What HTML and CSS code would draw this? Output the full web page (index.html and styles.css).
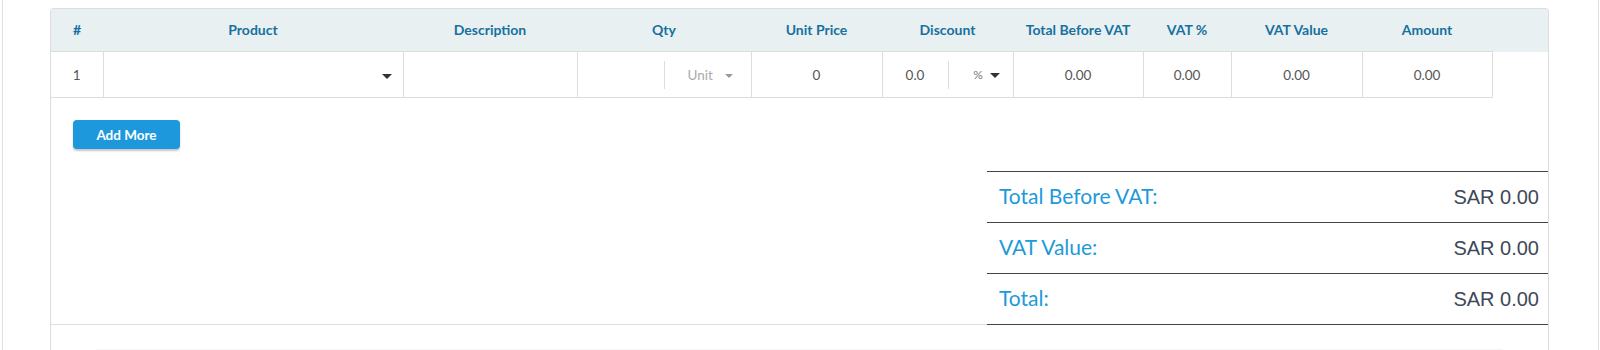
FILE: index.html
```html
<!DOCTYPE html>
<html lang="en">
<head>
    <meta charset="UTF-8">
    <title>Invoice Items</title>
    <link rel="stylesheet" href="styles.css">
</head>
<body>
    <div class="page">
        <div class="card">
            <table class="items">
                <colgroup>
                    <col class="c-num">
                    <col class="c-product">
                    <col class="c-desc">
                    <col class="c-qty">
                    <col class="c-price">
                    <col class="c-discount">
                    <col class="c-before">
                    <col class="c-vatp">
                    <col class="c-vatv">
                    <col class="c-amount">
                    <col class="c-fill">
                </colgroup>
                <thead>
                    <tr>
                        <th>#</th>
                        <th>Product</th>
                        <th>Description</th>
                        <th>Qty</th>
                        <th>Unit Price</th>
                        <th>Discount</th>
                        <th>Total Before VAT</th>
                        <th>VAT %</th>
                        <th>VAT Value</th>
                        <th>Amount</th>
                        <th></th>
                    </tr>
                </thead>
                <tbody>
                    <tr>
                        <td class="first">1</td>
                        <td class="product">
                            <span class="caret dark"></span>
                        </td>
                        <td></td>
                        <td class="split">
                            <div class="split-inner">
                                <span class="split-input"></span>
                                <span class="split-select unit">Unit <span class="caret light"></span></span>
                            </div>
                        </td>
                        <td>0</td>
                        <td class="split">
                            <div class="split-inner">
                                <span class="split-input disc">0.0</span>
                                <span class="split-select pct">% <span class="caret dark small"></span></span>
                            </div>
                        </td>
                        <td>0.00</td>
                        <td>0.00</td>
                        <td>0.00</td>
                        <td>0.00</td>
                        <td class="fill"></td>
                    </tr>
                </tbody>
            </table>

            <div class="card-body">
                <button type="button" class="btn-add">Add More</button>

                <div class="totals">
                    <div class="total-row">
                        <span class="total-label">Total Before VAT:</span>
                        <span class="total-value">SAR 0.00</span>
                    </div>
                    <div class="total-row">
                        <span class="total-label">VAT Value:</span>
                        <span class="total-value">SAR 0.00</span>
                    </div>
                    <div class="total-row">
                        <span class="total-label">Total:</span>
                        <span class="total-value">SAR 0.00</span>
                    </div>
                </div>
            </div>

            <div class="card-footer">
                <div class="footer-strip"></div>
            </div>
        </div>
    </div>
</body>
</html>
```

FILE: styles.css
```css
body {
    margin: 0;
    padding: 0;
    font-family: 'Lato', 'Open Sans', sans-serif;
    background-color: #fff;
    color: #555;
}

.page {
    margin: 0 1px 0 2px;
    padding: 8px 49px 0 47px;
    border-left: 1px solid #e0e0e0;
    border-right: 1px solid #e0e0e0;
    height: 342px;
    overflow: hidden;
}

.card {
    border: 1px solid #dddddd;
    border-bottom: none;
    border-radius: 4px 4px 0 0;
    overflow: hidden;
}

/* items table */
.items {
    width: 100%;
    border-collapse: collapse;
    table-layout: fixed;
}

.c-num { width: 52px; }
.c-product { width: 300px; }
.c-desc { width: 174px; }
.c-qty { width: 174px; }
.c-price { width: 131px; }
.c-discount { width: 131px; }
.c-before { width: 130px; }
.c-vatp { width: 88px; }
.c-vatv { width: 131px; }
.c-amount { width: 130px; }
.c-fill { width: 56px; }

.items th {
    height: 40px;
    padding: 0 0 2px 0;
    background-color: #e8f0f2;
    color: #17709e;
    font-size: 14px;
    font-weight: 700;
    text-align: center;
}

.items td {
    height: 45px;
    padding: 0;
    border: 1px solid #dddddd;
    font-size: 13.5px;
    color: #555;
    text-align: center;
}

.items td.first {
    border-left: none;
}

.items td.fill {
    border: none;
}

.items td.product {
    text-align: right;
    padding-right: 11px;
}

.caret {
    display: inline-block;
    width: 0;
    height: 0;
    border-left: 5px solid transparent;
    border-right: 5px solid transparent;
    border-top: 5px solid #333;
    vertical-align: middle;
}

.caret.dark { border-top-color: #333; }
.caret.light {
    border-left-width: 4px;
    border-right-width: 4px;
    border-top: 4px solid #999;
    margin-left: 9px;
}
.caret.small {
    border-left-width: 5px;
    border-right-width: 5px;
    margin-left: 4px;
}

.split-inner {
    display: flex;
    align-items: center;
    height: 45px;
}

.split-input {
    flex: 0 0 auto;
    width: 86px;
    text-align: center;
}

.split-input.disc { width: 65px; }

.split-select {
    flex: 1;
    height: 28px;
    line-height: 28px;
    border-left: 1px solid #dddddd;
    text-align: center;
}

.split-select.unit {
    color: #aaa;
    padding-left: 6px;
}

.split-select.pct {
    color: #777;
    font-size: 12px;
    padding-left: 12px;
}

/* body below table */
.card-body {
    padding-top: 22px;
    border-bottom: 1px solid #dddddd;
}

.btn-add {
    display: block;
    margin-left: 22px;
    width: 107px;
    height: 29px;
    padding: 0;
    border: none;
    border-radius: 4px;
    background-color: #1e98dc;
    color: #fff;
    font-family: 'Lato', sans-serif;
    font-size: 13.5px;
    font-weight: 700;
    box-shadow: 0 2px 2px rgba(0, 0, 0, 0.22);
    cursor: pointer;
}

.totals {
    width: 561px;
    margin: 22px 0 -1px auto;
}

.total-row {
    display: flex;
    justify-content: space-between;
    align-items: center;
    height: 50px;
    padding: 0 9px 0 12px;
    border-top: 1px solid #444;
}

.total-row:last-child {
    border-bottom: 1px solid #444;
}

.total-label {
    color: #1e9ad9;
    font-size: 21px;
    margin-bottom: 3px;
}

.total-value {
    font-family: 'Liberation Sans', Arial, sans-serif;
    font-size: 20px;
    color: #3d4858;
}

.card-footer {
    padding: 24px 45px 0 45px;
}

.footer-strip {
    height: 4px;
    background-color: #f6f6f6;
}
```
